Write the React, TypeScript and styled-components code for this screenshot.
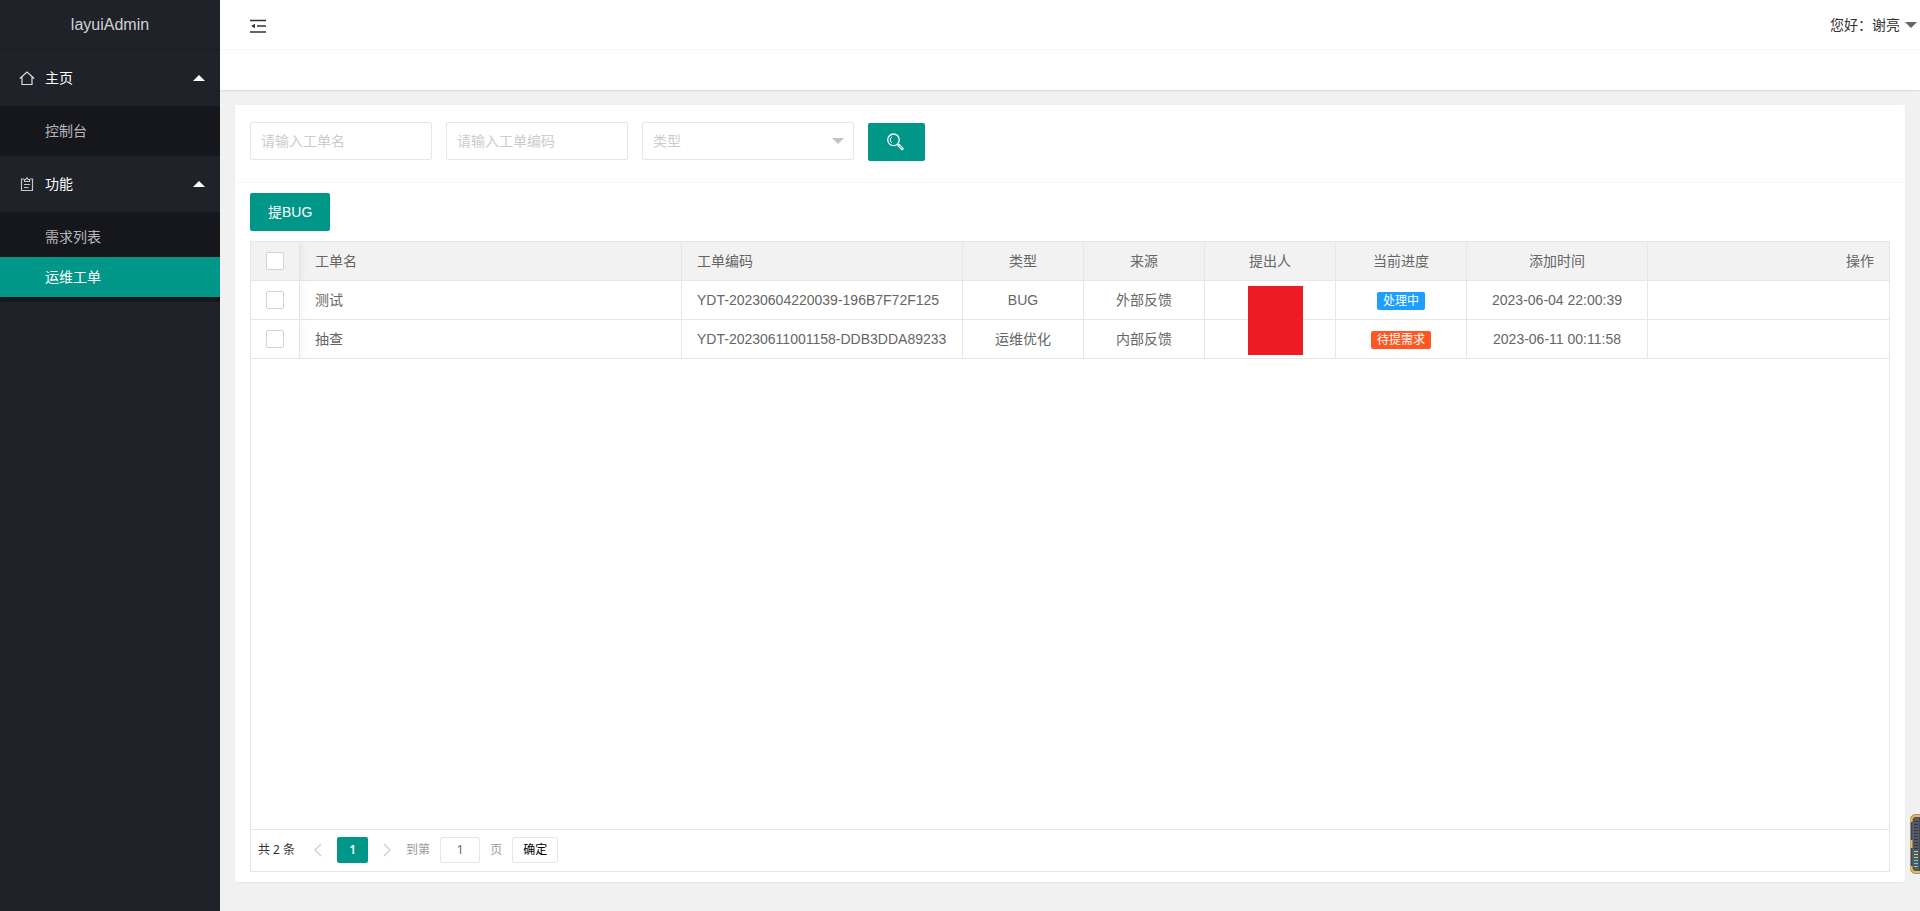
import React from "react";
import styled, { createGlobalStyle, css } from "styled-components";

const TEAL = "#009688";
const LINE = "#e6e6e6";

const GlobalStyle = createGlobalStyle`
  *, *::before, *::after { box-sizing: border-box; }
  body {
    margin: 0;
    background: #f1f1f1;
    color: #333;
    font: 14px/24px "Liberation Sans", "Noto Sans CJK SC", sans-serif;
  }
  button, input, select { font: inherit; margin: 0; }
  ul { margin: 0; padding: 0; list-style: none; }
  a { color: inherit; text-decoration: none; }
`;

const Shell = styled.div`
  display: flex;
  min-height: 100vh;
`;

const Sidebar = styled.aside`
  flex: 0 0 220px;
  background: #20222a;
  color: rgba(255, 255, 255, 0.7);
`;

const Logo = styled.div`
  height: 49px;
  margin-bottom: 1px;
  font-size: 16px;
  line-height: 49px;
  text-align: center;
  color: rgba(255, 255, 255, 0.8);
  box-shadow: 0 1px 2px rgba(0, 0, 0, 0.15);
`;

const MenuHead = styled.button`
  display: flex;
  align-items: center;
  width: 100%;
  height: 56px;
  padding: 0 15px 0 19px;
  border: 0;
  background: none;
  color: #fff;
  text-align: left;
  svg { flex: none; }
`;

const MenuLabel = styled.span`
  flex: 1;
  padding-left: 10px;
`;

const SubMenu = styled.ul`
  && { padding: 5px 0; }
  background: rgba(0, 0, 0, 0.3);
  border-radius: 2px;
`;

const SubLink = styled.a<{ $active?: boolean }>`
  display: block;
  padding-left: 45px;
  line-height: 40px;
  ${(p) => p.$active && css`background: ${TEAL}; color: #fff;`}
`;

const Caret = styled.span<{ $up?: boolean; $color: string }>`
  width: 0;
  height: 0;
  border: 6px solid transparent;
  ${(p) =>
    p.$up
      ? css`border-top-width: 0; border-bottom-color: ${p.$color};`
      : css`border-bottom-width: 0; border-top-color: ${p.$color};`}
`;

const Main = styled.div`
  flex: 1;
  min-width: 0;
  display: flex;
  flex-direction: column;
`;

const Header = styled.header`
  display: flex;
  align-items: center;
  justify-content: space-between;
  height: 50px;
  padding: 0 3px 0 30px;
  background: #fff;
  border-bottom: 1px solid #f6f6f6;
`;

const IconButton = styled.button`
  display: flex;
  padding: 0;
  border: 0;
  background: none;
  color: #333;
`;

const UserButton = styled.button`
  display: flex;
  align-items: center;
  gap: 5px;
  padding: 0;
  border: 0;
  background: none;
  color: #333;
`;

const TabStrip = styled.div`
  height: 40px;
  background: #fff;
  box-shadow: 0 1px 2px rgba(0, 0, 0, 0.1);
`;

const Content = styled.main`
  flex: 1;
  display: flex;
  padding: 15px 15px 29px;
`;

const Card = styled.section`
  flex: 1;
  min-width: 0;
  display: flex;
  flex-direction: column;
  background: #fff;
  border-radius: 2px;
  box-shadow: 0 1px 2px rgba(0, 0, 0, 0.05);
`;

const Filters = styled.form`
  display: flex;
  gap: 14px;
  height: 78px;
  padding: 17px 15px;
  border-bottom: 1px solid #f6f6f6;
`;

const field = css`
  height: 38px;
  padding: 0 10px;
  border: 1px solid ${LINE};
  border-radius: 2px;
  background: #fff;
  outline: 0;
`;

const TextField = styled.input`
  ${field}
  width: 182px;
  &::placeholder { color: #ccc; opacity: 1; }
`;

const SelectWrap = styled.div`
  display: grid;
  width: 212px;
  height: 38px;
  align-items: center;
  > * { grid-area: 1 / 1; }
  ${Caret} { justify-self: end; margin-right: 10px; pointer-events: none; }
`;

const Select = styled.select`
  ${field}
  width: 100%;
  appearance: none;
  color: #ccc;
`;

const PrimaryButton = styled.button`
  display: inline-flex;
  align-items: center;
  justify-content: center;
  height: 38px;
  padding: 0 18px;
  border: 0;
  border-radius: 2px;
  background: ${TEAL};
  color: #fff;
`;

const SearchButton = styled(PrimaryButton)`
  width: 57px;
  margin-top: 1px;
`;

const CardBody = styled.div`
  flex: 1;
  display: flex;
  flex-direction: column;
  align-items: flex-start;
  gap: 10px;
  padding: 10px 15px;
`;

const TableFrame = styled.div`
  flex: 1;
  width: 100%;
  display: flex;
  flex-direction: column;
  justify-content: space-between;
  border: 1px solid ${LINE};
`;

const Table = styled.table`
  width: 100%;
  table-layout: fixed;
  border-collapse: separate;
  border-spacing: 0;
  color: #666;
`;

type Align = "left" | "center" | "right";

const cell = css<{ $align?: Align; $last?: boolean }>`
  height: 39px;
  padding: 0 15px;
  border: 0 solid ${LINE};
  border-width: 0 ${(p) => (p.$last ? 0 : 1)}px 1px 0;
  font-weight: 400;
  text-align: ${(p) => p.$align ?? "left"};
  white-space: nowrap;
`;

const Th = styled.th`
  ${cell}
  background: #f2f2f2;
`;

const Td = styled.td`
  ${cell}
  position: relative;
`;

const pinned = css`
  position: relative;
  box-shadow: 0 0 8px rgba(0, 0, 0, 0.08);
  clip-path: inset(0 -8px 0 0);
`;
const PinnedTh = styled(Th)`${pinned}`;
const PinnedTd = styled(Td)`${pinned}`;

const Check = styled.input`
  display: block;
  appearance: none;
  width: 18px;
  height: 18px;
  border: 1px solid #d2d2d2;
  border-radius: 2px;
  background: #fff;
  &:checked { background: ${TEAL}; border-color: ${TEAL}; }
`;

const Badge = styled.span<{ $color: string }>`
  display: inline-block;
  height: 18px;
  padding: 0 6px;
  border-radius: 2px;
  background: ${(p) => p.$color};
  color: #fff;
  font-size: 12px;
  line-height: 18px;
  vertical-align: middle;
`;

const Redaction = styled.div`
  position: absolute;
  z-index: 1;
  top: 5px;
  left: 43px;
  width: 55px;
  height: 69px;
  background: #ed1c24;
`;

const Pager = styled.nav`
  display: flex;
  align-items: flex-start;
  height: 42px;
  padding: 7px 7px 0;
  border-top: 1px solid ${LINE};
  font-family: "Noto Sans", "Noto Sans CJK SC", sans-serif;
  font-size: 12px;
  line-height: 26px;
  color: #999;
`;

const Total = styled.span`
  margin-right: 10px;
  color: #333;
`;

const PagerArrow = styled.button`
  display: flex;
  align-items: center;
  justify-content: center;
  width: 26px;
  height: 26px;
  padding: 0;
  border: 0;
  background: none;
  color: #d2d2d2;
`;

const PageNumber = styled.button`
  width: 31px;
  height: 26px;
  margin: 0 6px;
  padding: 0;
  border: 0;
  border-radius: 2px;
  background: ${TEAL};
  color: #fff;
  font-weight: 600;
`;

const Jump = styled.label`
  display: flex;
  align-items: center;
  gap: 10px;
  margin: 0 10px 0 6px;
`;

const JumpInput = styled.input`
  width: 40px;
  height: 26px;
  padding: 0;
  border: 1px solid ${LINE};
  border-radius: 2px;
  color: #666;
  text-align: center;
`;

const Confirm = styled.button`
  width: 46px;
  height: 26px;
  padding: 0;
  border: 1px solid ${LINE};
  border-radius: 2px;
  background: #fff;
  color: #000;
  line-height: 24px;
`;

const Gauge = styled.div`
  position: fixed;
  right: 0;
  bottom: 37px;
  display: flex;
`;

const HomeIcon = () => (
  <svg width="16" height="16" viewBox="0 0 16 16" fill="none" stroke="#dedede" strokeWidth="1.200">
    <path d="M.8 8.500 8 2l7.200 6.500M3 7v7.500h10V7" />
  </svg>
);

const ListIcon = () => (
  <svg width="16" height="16" viewBox="0 0 16 16" fill="none" stroke="#c4c4c6" strokeWidth="1.200">
    <path d="M5 3H2.500v11.500h11V3H11M5.500 3.500v2h5v-2H9.300L8 1.800 6.700 3.500zM5 8.500h6M5 11.500h4.500" />
  </svg>
);

const FoldIcon = () => (
  <svg width="16" height="18" viewBox="0 0 16 18" fill="none" stroke="currentColor">
    <path d="M0 4.500h16M7 10h9M0 16h16" strokeWidth="1.500" />
    <path d="M5 7.800v4.400L1.200 10z" fill="currentColor" stroke="none" />
  </svg>
);

const SearchIcon = () => (
  <svg width="19" height="18" viewBox="0 0 19 18" fill="none" stroke="#fff">
    <circle cx="6.500" cy="6.800" r="5.800" strokeWidth="1.300" />
    <path d="M5 3.800a3.500 3.500 0 0 0 0 6" />
    <path d="m11.800 12.300 3.400 3.400" strokeWidth="3" strokeLinecap="round" />
    <path d="m12.300 12.800 2.700 2.700" stroke={TEAL} strokeWidth="1" strokeLinecap="round" />
  </svg>
);

const Chevron = ({ right }: { right?: boolean }) => (
  <svg width="8" height="14" viewBox="0 0 8 14" fill="none" stroke="currentColor" strokeWidth="1.500">
    <path d={right ? "M1 1l6 6-6 6" : "M7 1 1 7l6 6"} />
  </svg>
);

const gaugeColor = (i: number) => {
  if (i < 10) return "#353945";
  if (i < 13) return "#a5e071";
  return "#56e0bd";
};

const GaugeIcon = () => (
  <svg width="10" height="60" viewBox="0 0 10 60">
    <path d="M10 1H3.500L1 3.500v53L3.500 59H10z" fill="#535968" stroke="#3a3836" />
    <path d="M10 2H4L1.500 4.500V8M1.500 26v8M1.500 52v3.500L4 58h6" fill="none" stroke="#eebc3c" strokeWidth="2" />
    {Array.from({ length: 16 }, (_, i) => (
      <rect key={i} x="4" y={7 + i * 3} width="4" height="1" fill={gaugeColor(i)} />
    ))}
  </svg>
);

const menu = [
  { label: "主页", Icon: HomeIcon, items: ["控制台"] },
  { label: "功能", Icon: ListIcon, items: ["需求列表", "运维工单"] },
];

const columns: { title: string; align: Align; width?: number }[] = [
  { title: "工单名", align: "left" },
  { title: "工单编码", align: "left", width: 281 },
  { title: "类型", align: "center", width: 121 },
  { title: "来源", align: "center", width: 121 },
  { title: "提出人", align: "center", width: 131 },
  { title: "当前进度", align: "center", width: 131 },
  { title: "添加时间", align: "center", width: 181 },
  { title: "操作", align: "right", width: 241 },
];

const orders = [
  { name: "测试", code: "YDT-20230604220039-196B7F72F125", type: "BUG", source: "外部反馈", status: "处理中", color: "#1e9fff", time: "2023-06-04 22:00:39" },
  { name: "抽查", code: "YDT-20230611001158-DDB3DDA89233", type: "运维优化", source: "内部反馈", status: "待提需求", color: "#ff5722", time: "2023-06-11 00:11:58" },
];

export default function App() {
  return (
    <Shell>
      <GlobalStyle />
      <Sidebar>
        <Logo>layuiAdmin</Logo>
        <nav>
          {menu.map(({ label, Icon, items }) => (
            <div key={label}>
              <MenuHead type="button" aria-expanded="true">
                <Icon />
                <MenuLabel>{label}</MenuLabel>
                <Caret $up $color="#fff" />
              </MenuHead>
              <SubMenu>
                {items.map((item) => (
                  <li key={item}>
                    <SubLink href="#" $active={item === "运维工单"}>{item}</SubLink>
                  </li>
                ))}
              </SubMenu>
            </div>
          ))}
        </nav>
      </Sidebar>
      <Main>
        <Header>
          <IconButton type="button" aria-label="侧边伸缩"><FoldIcon /></IconButton>
          <UserButton type="button">
            您好：谢亮
            <Caret $color="#666" />
          </UserButton>
        </Header>
        <TabStrip />
        <Content>
          <Card>
            <Filters onSubmit={(e) => e.preventDefault()}>
              <TextField aria-label="工单名" placeholder="请输入工单名" />
              <TextField aria-label="工单编码" placeholder="请输入工单编码" />
              <SelectWrap>
                <Select aria-label="类型" defaultValue="">
                  <option value="">类型</option>
                </Select>
                <Caret $color="#c2c2c2" />
              </SelectWrap>
              <SearchButton type="submit" aria-label="搜索"><SearchIcon /></SearchButton>
            </Filters>
            <CardBody>
              <PrimaryButton type="button">提BUG</PrimaryButton>
              <TableFrame>
                <Table>
                  <colgroup>
                    <col width={49} />
                    {columns.map((c) => <col key={c.title} width={c.width} />)}
                  </colgroup>
                  <thead>
                    <tr>
                      <PinnedTh><Check type="checkbox" aria-label="全选" /></PinnedTh>
                      {columns.map((c, i) => (
                        <Th key={c.title} $align={c.align} $last={i === columns.length - 1}>{c.title}</Th>
                      ))}
                    </tr>
                  </thead>
                  <tbody>
                    {orders.map((o, i) => (
                      <tr key={o.code}>
                        <PinnedTd><Check type="checkbox" aria-label={o.name} /></PinnedTd>
                        <Td>{o.name}</Td>
                        <Td>{o.code}</Td>
                        <Td $align="center">{o.type}</Td>
                        <Td $align="center">{o.source}</Td>
                        <Td $align="center">{i === 0 && <Redaction />}</Td>
                        <Td $align="center"><Badge $color={o.color}>{o.status}</Badge></Td>
                        <Td $align="center">{o.time}</Td>
                        <Td $last />
                      </tr>
                    ))}
                  </tbody>
                </Table>
                <Pager aria-label="分页">
                  <Total>共 2 条</Total>
                  <PagerArrow type="button" aria-label="上一页"><Chevron /></PagerArrow>
                  <PageNumber type="button">1</PageNumber>
                  <PagerArrow type="button" aria-label="下一页"><Chevron right /></PagerArrow>
                  <Jump>
                    到第
                    <JumpInput defaultValue="1" />
                    页
                  </Jump>
                  <Confirm type="button">确定</Confirm>
                </Pager>
              </TableFrame>
            </CardBody>
          </Card>
        </Content>
      </Main>
      <Gauge><GaugeIcon /></Gauge>
    </Shell>
  );
}
